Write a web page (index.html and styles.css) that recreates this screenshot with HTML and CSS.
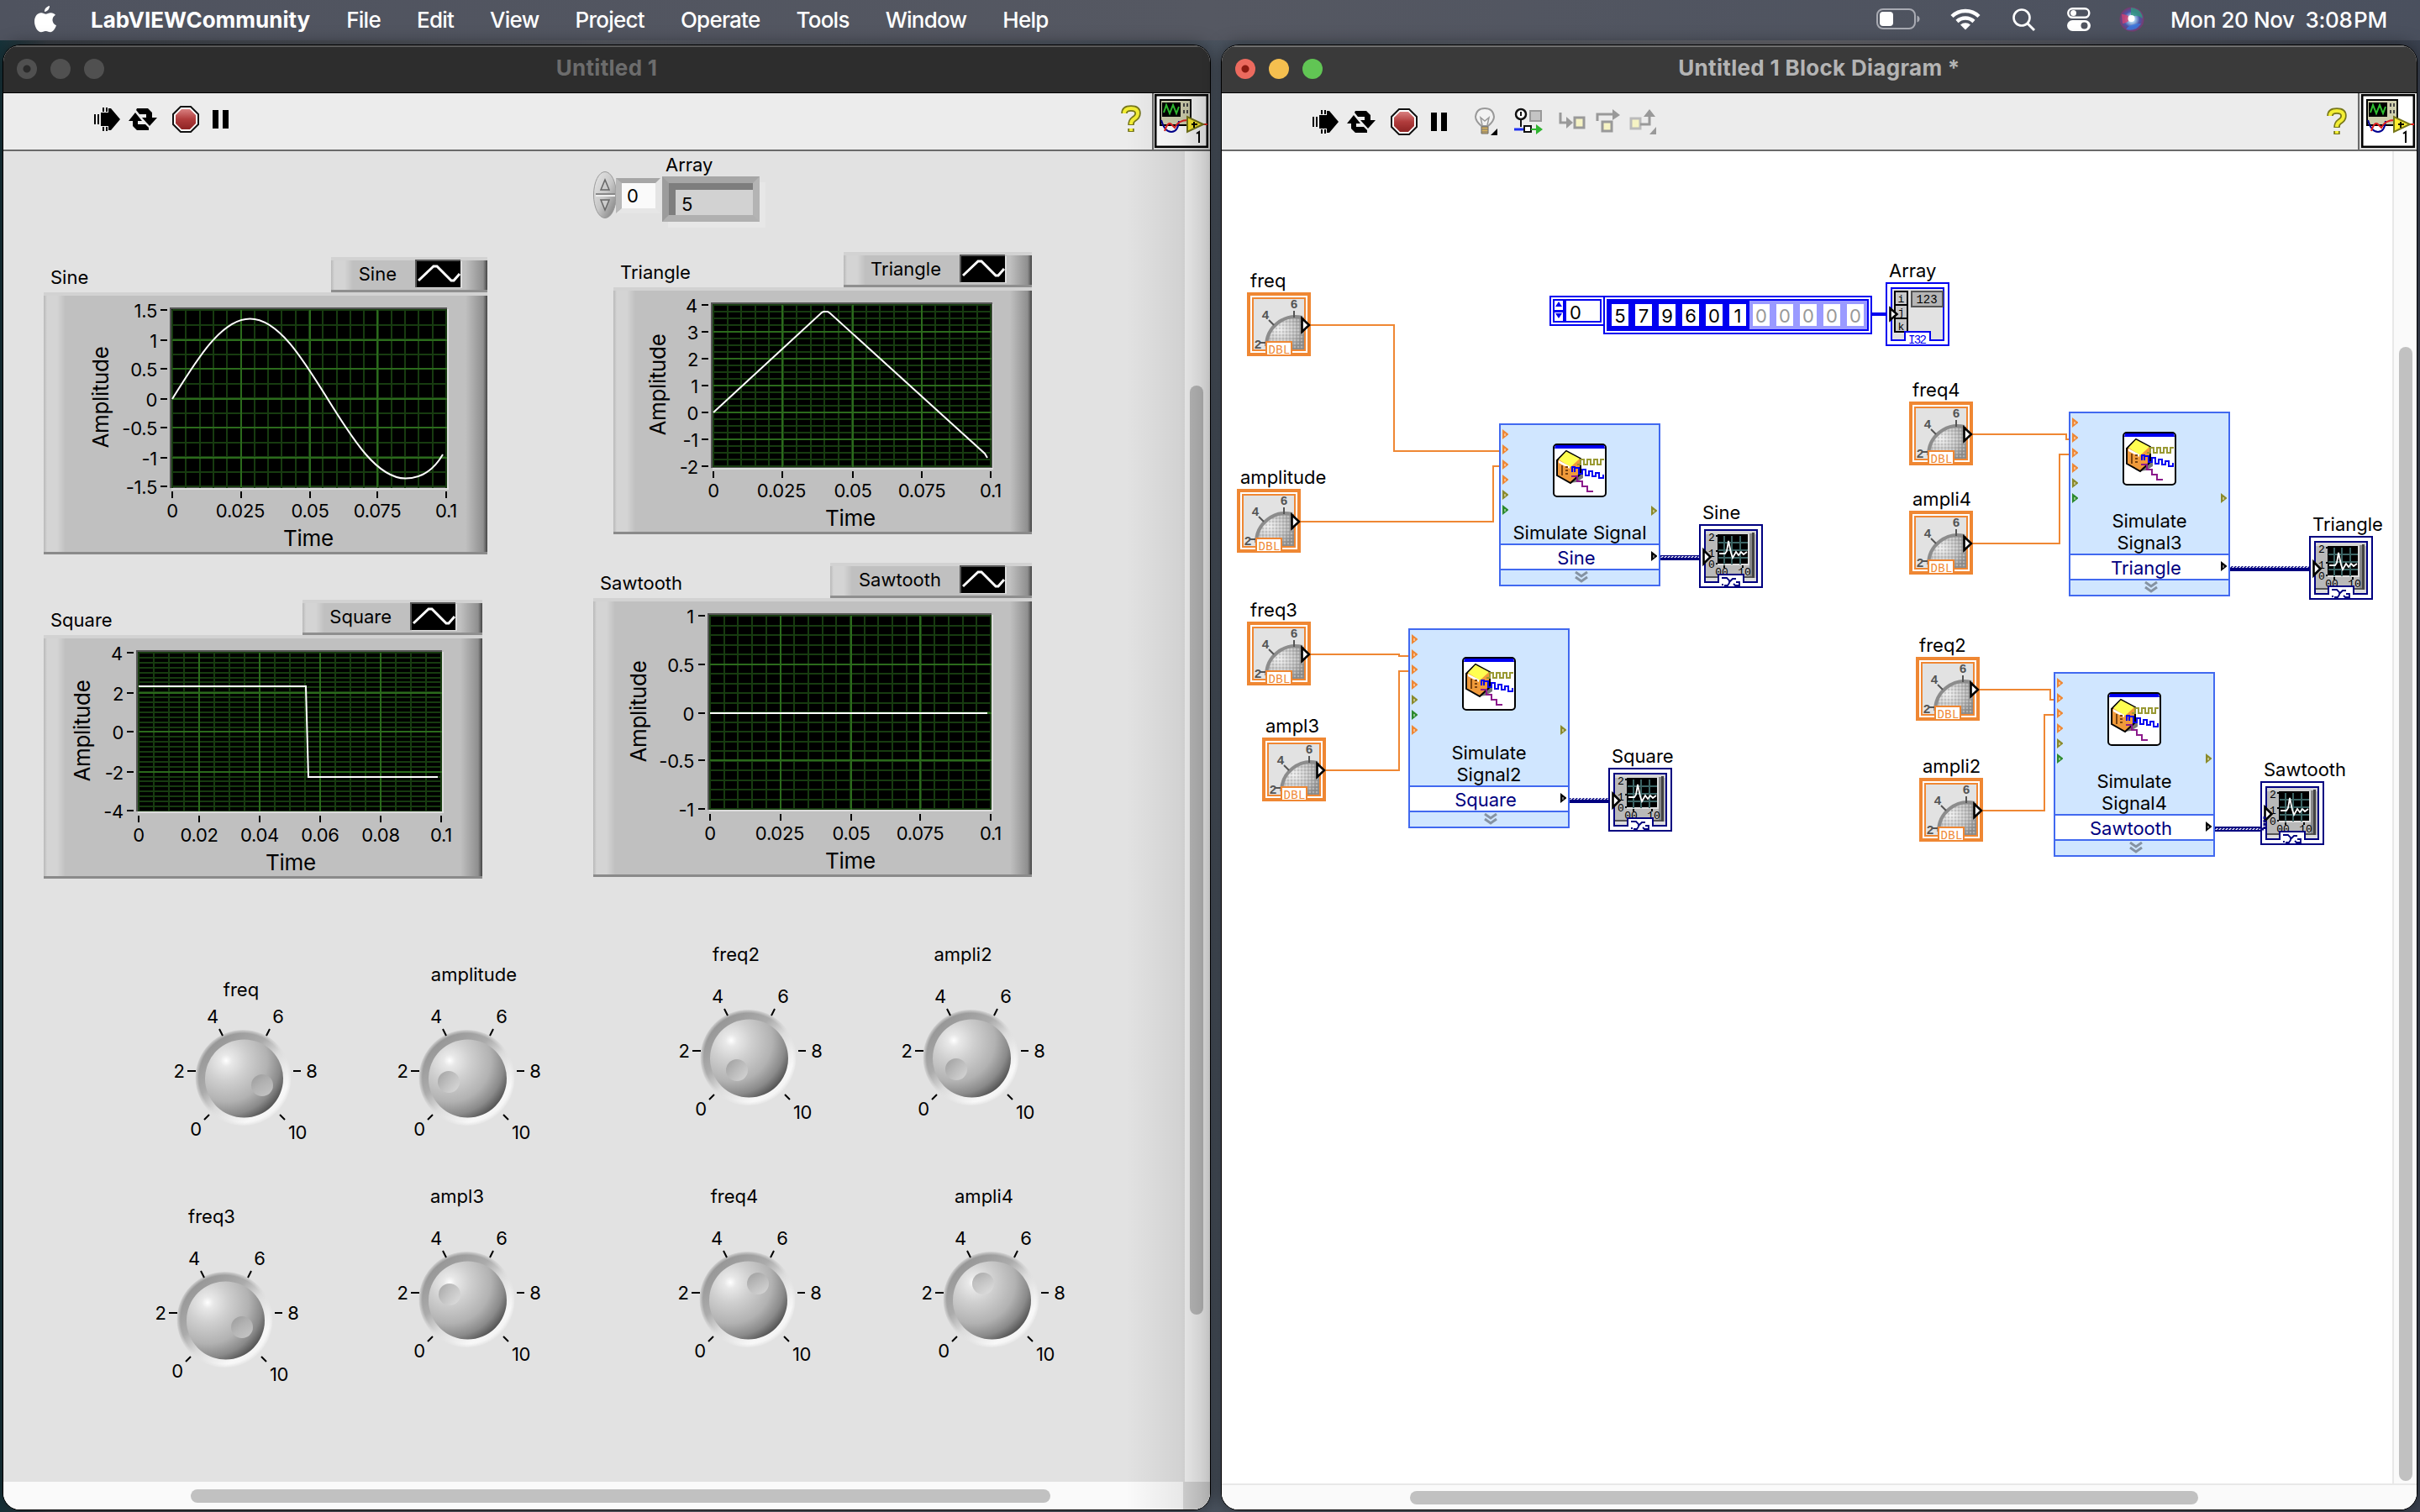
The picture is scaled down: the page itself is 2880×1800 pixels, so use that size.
FILE: index.html
```html
<!DOCTYPE html>
<html lang="en">
<head>
<meta charset="utf-8">
<title>Untitled 1 Block Diagram</title>
<link rel="stylesheet" href="styles.css">
</head>
<body>
<svg class="defs" width="0" height="0" aria-hidden="true">
  <defs>
    <radialGradient id="ball" cx="0.27" cy="0.27" r="0.85">
      <stop offset="0" stop-color="#fff"/><stop offset="0.09" stop-color="#e8e8e8"/><stop offset="0.3" stop-color="#d0d0d0"/>
      <stop offset="0.62" stop-color="#b2b2b2"/><stop offset="0.82" stop-color="#8a8a8a"/><stop offset="1" stop-color="#484848"/>
    </radialGradient>
    <linearGradient id="rim" x1="0.15" y1="0.1" x2="0.85" y2="0.9">
      <stop offset="0" stop-color="#939393"/><stop offset="0.35" stop-color="#ababab"/><stop offset="0.55" stop-color="#dcdcdc"/><stop offset="0.85" stop-color="#f8f8f8"/><stop offset="1" stop-color="#f2f2f2"/>
    </linearGradient>
    <radialGradient id="rimfade" cx="0.5" cy="0.5" r="0.5">
      <stop offset="0.91" stop-color="#e2e2e2" stop-opacity="0"/><stop offset="1" stop-color="#e2e2e2"/>
    </radialGradient>
    <linearGradient id="dimple" x1="0.15" y1="0.1" x2="0.85" y2="0.9">
      <stop offset="0" stop-color="#8f8f8f"/><stop offset="0.5" stop-color="#b9b9b9"/><stop offset="1" stop-color="#e0e0e0"/>
    </linearGradient>
    <radialGradient id="miniball" cx="0.35" cy="0.4" r="0.7">
      <stop offset="0" stop-color="#ececec"/><stop offset="0.6" stop-color="#bcbcbc"/><stop offset="1" stop-color="#8f8f8f"/>
    </radialGradient>
    <linearGradient id="red" x1="0" y1="0" x2="0" y2="1"><stop offset="0" stop-color="#d98080"/><stop offset="0.5" stop-color="#b03c3c"/><stop offset="1" stop-color="#8e2424"/></linearGradient>
    <linearGradient id="oval" x1="0" y1="0" x2="1" y2="1"><stop offset="0" stop-color="#e8e8e8"/><stop offset="0.5" stop-color="#c8c8c8"/><stop offset="1" stop-color="#777"/></linearGradient>
    <radialGradient id="siri"><stop offset="0" stop-color="#fff"/><stop offset="0.3" stop-color="#9cc4e8"/><stop offset="0.65" stop-color="#4a55a8"/><stop offset="1" stop-color="#7a3a6c"/></radialGradient>
    <pattern id="dither" width="4" height="4" patternUnits="userSpaceOnUse">
      <rect width="2" height="2" fill="#fff" opacity="0.3"/><rect x="2" y="2" width="2" height="2" fill="#777" opacity="0.25"/>
    </pattern>
    <pattern id="dash" width="4" height="6" patternUnits="userSpaceOnUse">
      <rect width="4" height="6" fill="#000080"/><path d="M0 4L2 2H4L2 4Z" fill="#fff"/>
    </pattern>
  </defs>

  <symbol id="knob" viewBox="-90 -90 180 180" overflow="visible">
    <circle r="57" cx="-0.500" cy="-1" fill="url(#rim)"/>
    <circle r="58" cx="-0.500" cy="-1" fill="url(#rimfade)"/>
    <circle r="46.500" cx="0.500" fill="url(#ball)"/>
    <path class="tick" d="M-29-59l4 8M31-59l-4 8M-67-9h10M59-9h9M-41 43l-6 6M43 43l6 6"/>
    <g class="num"><text x="-37" y="-66">4</text><text x="41" y="-66">6</text><text x="-77" y="-1">2</text><text x="81" y="-1">8</text><text x="-57" y="68">0</text><text x="64" y="72">10</text></g>
  </symbol>

  <symbol id="dbl" viewBox="0 0 76 76">
    <rect width="76" height="76" fill="#ef8733"/><rect x="4" y="4" width="68" height="68" fill="#fff"/><rect x="7" y="7" width="62" height="62" fill="none" stroke="#ef8733" stroke-width="2"/>
    <rect x="8" y="8" width="60" height="60" fill="#e2e2e2"/>
    <path d="M22 68A36 36 0 0 1 68 30V68Z" fill="url(#miniball)"/><path d="M22 68A36 36 0 0 1 68 30V68Z" fill="url(#dither)"/>
    <path d="M23 64A35 35 0 0 1 66 30" fill="none" stroke="#8c8c8c" stroke-width="4"/>
    <path d="M56 22v8M26 33l6 6M16 60h8" stroke="#555" stroke-width="2" fill="none"/>
    <g class="mini"><text x="56" y="19">6</text><text x="22" y="32">4</text><text x="13" y="67">2</text></g>
    <rect x="22" y="58" width="32" height="14" fill="#ef8733"/><rect x="24" y="60" width="28" height="14" fill="#fff"/>
    <text class="tag" x="38.500" y="72.500" fill="#ef8733" textLength="26">DBL</text>
    <path d="M65.500 31V47L74 39Z" fill="#fff" stroke="#000" stroke-width="2.600"/>
  </symbol>

  <symbol id="graph" viewBox="0 0 76 76">
    <rect width="76" height="76" fill="#000080"/><rect x="2" y="2" width="72" height="72" fill="#fff"/><rect x="7" y="7" width="62" height="62" fill="#b9b9b9" stroke="#000080" stroke-width="2"/>
    <path d="M8 8h60v4H8z" fill="#d5d5d5"/><rect x="8" y="64" width="60" height="4" fill="#ddd"/><rect x="8" y="62" width="58" height="2" fill="#555"/><path d="M60 11h3v51h-3z" fill="#888"/><path d="M63 10h3v54h-3z" fill="#444"/>
    <rect x="22" y="12" width="38" height="37" fill="#ddd"/><rect x="22" y="12" width="36" height="35" fill="#000"/>
    <path d="M30 14V48M39 14V48M49 14V48M23 22H58M23 31H58M23 40H58" stroke="#3c6464" stroke-width="2" fill="none"/>
    <path d="M24 35h7l2-3 2-12 3 14 2 6 4-7 3 4 3-4 3 3 4-3" stroke="#fff" stroke-width="1.800" fill="none"/>
    <g class="mini dark small"><text x="15" y="20">2</text><text x="15" y="39">1</text><text x="15" y="52">0</text><text x="27" y="61">00</text><text x="54" y="61">10</text></g>
    <path d="M20 14h2M20 32h2M20 47h2M30 49v3M52 49v3" stroke="#000" stroke-width="2"/>
    <rect x="22" y="59" width="32" height="11" fill="#000080"/><rect x="24" y="61" width="28" height="13" fill="#fff"/>
    <path d="M27 64h6l3 3v3l-2 3h-4M27 72h2M36 69l4-4h4M41 71l2 2h5v-4h-4" stroke="#000080" stroke-width="1.800" fill="none"/>
    <path d="M5.500 31V47L13.500 39Z" fill="#fff" stroke="#000" stroke-width="2.600"/>
  </symbol>

  <symbol id="express" viewBox="0 0 64 64">
    <rect x="1" y="1" width="62" height="62" rx="4" fill="#fff" stroke="#000" stroke-width="2"/><path d="M3 2h58l1 4H2z" fill="#0000f0"/>
    <path d="M20 47l8-1 8-5v-7l-5-4z" fill="#777"/>
    <path d="M5 20L16 9L33 18V36L21 47L5 38Z" fill="#f09a3a" stroke="#000" stroke-width="2"/>
    <path d="M7 19L16 9.500L32 18L21 28Z" fill="#ffff50"/><path d="M7 20l13 7v3L7 23z" fill="#fff"/>
    <path d="M11 26v12M15 28h3M15 32h3M15 36h3" stroke="#7a4310" stroke-width="2" fill="none"/>
    <path d="M29 25h4v-6h4v6h4v-6h4v6h4v-6h4v6h4v-6h4" stroke="#999933" stroke-width="2" fill="none"/>
    <path d="M23 34v-6h3v6M26 29h5v7h4v-5h4v7h4v-5h4v6h4v-4h4v6h5v-4" stroke="#0000f0" stroke-width="2" fill="none"/>
    <path d="M22 39h7v6h6v6h6v6h7" stroke="#8b1a8b" stroke-width="2" fill="none"/>
  </symbol>

  <symbol id="pin" viewBox="0 0 7 12"><path d="M0 0L7 5.500V6.500L0 12Z"/><rect x="2" y="5" width="2" height="3" fill="#fff" opacity="0.45"/></symbol>
  <symbol id="chev" viewBox="0 0 16 14"><path d="M1 1l7 5 7-5M1 7l7 5 7-5" fill="none" stroke="#8593a3" stroke-width="3"/></symbol>

  <symbol id="run" viewBox="0 0 32 28"><path d="M0 8h2v12H0zM4 8h2v12H4zM8 6h9V1h3l11 13-11 13h-3v-5H8z"/><path d="M10 0h2v5h-2zM10 23h2v5h-2zM14 0h2v5h-2zM14 23h2v5h-2z"/></symbol>
  <symbol id="loop" viewBox="0 0 34 28"><path d="M10 1h13l5 5v6h6l-9 10-9-10h5V8h-8L9 3zM24 27H10l-5-5v-6H0L8 6l8 10h-5v4h9l4 4z"/></symbol>
  <symbol id="stop" viewBox="0 0 32 32"><path d="M10 1h12l9 9v12l-9 9H10l-9-9V10z" fill="#fff" stroke="#111" stroke-width="2"/><path d="M11 4h10l7 7v10l-7 7H11l-7-7V11z" fill="url(#red)"/></symbol>
  <symbol id="pause" viewBox="0 0 20 22"><path d="M0 0h7v22H0zM12 0h7v22h-7z"/></symbol>
  <symbol id="help" viewBox="0 0 24 34"><path d="M4 10Q4 4 12 4T20 10Q20 14 15 17Q12 19 12 24M12 28v4" fill="none" stroke="#77771a" stroke-width="7.500"/><path d="M4 10Q4 4 12 4T20 10Q20 14 15 17Q12 19 12 23M12 28v3" fill="none" stroke="#f3ee35" stroke-width="4"/></symbol>
  <symbol id="vi" viewBox="0 0 64 64">
    <rect x="1" y="1" width="62" height="62" fill="#fff" stroke="#000" stroke-width="3"/>
    <rect x="7" y="7" width="36" height="30" fill="#cfcfae" stroke="#000" stroke-width="2"/><rect x="9" y="10" width="22" height="17" fill="#000"/>
    <path d="M11 22l3-9 4 10 4-10 4 10 3-8" stroke="#30c030" stroke-width="2" fill="none"/><path d="M35 11v4M39 11v4M35 19v4M39 19v4" stroke="#444" stroke-width="2"/>
    <path d="M8 31q4 14 12 14t9-13" fill="none" stroke="#000090" stroke-width="2"/><path d="M12 44q4-12 8-8t4 4q4-9 16-9M54 36h9" fill="none" stroke="#e02020" stroke-width="2"/>
    <path d="M39 27V45L58 36Z" fill="#ffee30" stroke="#77771a" stroke-width="2"/><path d="M44 36h7M47 33v7" stroke="#000" stroke-width="2"/>
    <path d="M50 47l3-2V58" fill="none" stroke="#000" stroke-width="2"/>
  </symbol>
</svg>

<div class="desktop">
  <header class="menubar">
    <svg class="apple" viewBox="0 0 26 32"><path d="M18 0c.3 3-2.600 7-6 7C11.600 4 14.500.6 18 0zM25 10.800c-5.500 3.400-4 10.600 1 12.500-1.500 4-4 8-7 8-2.200 0-3-1.300-5.600-1.300S10 31.300 8 31.300C3.500 31.300-.3 24 0 18 .3 12 4 8.300 8 8.300c2.300 0 4 1.400 5.500 1.400S17 8.200 19.500 8.200c2.200 0 4.200 1 5.500 2.600z" fill="#fff"/></svg>
    <nav class="menus"><b>LabVIEWCommunity</b><span>File</span><span>Edit</span><span>View</span><span>Project</span><span>Operate</span><span>Tools</span><span>Window</span><span>Help</span></nav>
    <div class="status">
      <svg width="52" height="26" viewBox="0 0 52 26"><rect x="1" y="1" width="45" height="23" rx="7" fill="none" stroke="#a9abb3" stroke-width="2"/><rect x="4" y="4" width="16" height="17" rx="4" fill="#fff"/><path d="M48.500 8.500q3 1 3 4t-3 4z" fill="#a9abb3"/></svg>
      <svg width="36" height="26" viewBox="0 0 36 26"><g fill="none" stroke="#fff" stroke-width="4.500"><path d="M2 9.500a23 23 0 0 1 32 0"/><path d="M8 15.500a14.500 14.500 0 0 1 20 0"/></g><path d="M12 19.500a9 9 0 0 1 12 0l-6 6z" fill="#fff"/></svg>
      <svg width="27" height="27" viewBox="0 0 27 27"><circle cx="11" cy="11" r="9.500" fill="none" stroke="#fff" stroke-width="2.600"/><path d="M18 18l8 8" stroke="#fff" stroke-width="3"/></svg>
      <svg width="28" height="28" viewBox="0 0 28 28"><rect x="1.300" y="1.300" width="25" height="10.500" rx="5.200" fill="none" stroke="#fff" stroke-width="2.500"/><circle cx="7.500" cy="6.500" r="3.500" fill="#fff"/><rect y="15" width="28" height="13" rx="6.500" fill="#fff"/><circle cx="20.500" cy="21.500" r="4" fill="#50545f"/></svg>
      <svg width="30" height="30" viewBox="0 0 30 30"><circle cx="15" cy="15" r="14.500" fill="url(#siri)"/><path d="M3 9Q10 8 14 15Q8 20 4 20Z" fill="#d6406f" opacity=".8"/><path d="M14 1Q27 2 28 14Q20 8 14 13Z" fill="#2f9a80" opacity=".8"/><path d="M8 27Q12 20 26 20Q20 30 8 27Z" fill="#3b7ae0" opacity=".8"/><circle cx="14.500" cy="14" r="4" fill="#fff"/></svg>
      <span class="date">Mon 20 Nov&nbsp; 3:08<small> </small>PM</span>
    </div>
  </header>

  <section class="window front">
    <div class="titlebar"><i class="light close"></i><i class="light"></i><i class="light"></i><h1>Untitled 1</h1></div>
    <div class="toolbar">
      <svg class="t-run"><use href="#run"/></svg><svg class="t-loop"><use href="#loop"/></svg><svg class="t-stop"><use href="#stop"/></svg><svg class="t-pause"><use href="#pause"/></svg>
      <svg class="t-help"><use href="#help"/></svg><div class="vi"><svg><use href="#vi"/></svg></div>
    </div>
    <div class="canvas">
      <div class="layer">
        <span class="label a-title">Array</span>
        <svg class="spin" viewBox="0 0 28 56"><ellipse cx="14" cy="28" rx="13.500" ry="27.500" fill="url(#oval)" stroke="#999"/><path d="M3 27h23" stroke="#888" stroke-width="2"/><path d="M3 29h23" stroke="#eee" stroke-width="2"/><path d="M9 22l5-12 5 12zM9 34l5 12 5-12z" fill="#ccc" stroke="#666" stroke-width="1.500"/></svg>
        <div class="index">0</div><div class="element">5</div>

        <span class="label s-title">Sine</span>
        <div class="chart c-sine">
          <div class="legend">Sine<svg class="swatch" viewBox="0 0 56 34"><use href="#swatchline"/></svg></div>
          <svg class="plot" viewBox="52 348 528 312">
            <rect class="hi" x="204" y="368" width="330" height="215"/><rect class="lo" x="202" y="366" width="330" height="215"/><rect x="204" y="368" width="327" height="212"/>
            <g class="minor"><path d="M204 475H532" stroke-width="212" stroke-dasharray="2 14.300"/><path d="M368 368V580" stroke-width="327" stroke-dasharray="2 15.500"/></g>
            <g class="major"><path d="M287 369V580M369 369V580M449 369V580M205 405H532M205 439H532M205 475H532M205 509H532M205 545H532"/></g>
            <path class="axis" d="M191 369h8M191 405h8M191 439h8M191 475h8M191 509h8M191 545h8M191 579h8M205 585v8M287 585v8M369 585v8M449 585v8M531 585v8"/>
            <path class="trace" d="M205 475C235.200 426.300 264 379.500 297.500 379.500C331 379.500 359.800 426.300 390 475C420.200 523.700 449 569.500 482.500 569.500C501 569.500 516 560 527 541"/>
            <g class="ynum"><text x="187" y="378">1.5</text><text x="187" y="414">1</text><text x="187" y="448">0.5</text><text x="187" y="484">0</text><text x="187" y="518">-0.5</text><text x="187" y="554">-1</text><text x="187" y="588">-1.5</text></g>
            <g class="num"><text x="205" y="616">0</text><text x="286" y="616">0.025</text><text x="369" y="616">0.05</text><text x="449" y="616">0.075</text><text x="531" y="616">0.1</text></g>
            <text class="name" x="367" y="650">Time</text><text class="name" transform="translate(129 473) rotate(-90)" textLength="121">Amplitude</text>
          </svg>
        </div>

        <span class="label t-title">Triangle</span>
        <div class="chart c-tri">
          <div class="legend">Triangle<svg class="swatch" viewBox="0 0 56 34"><use href="#swatchline"/></svg></div>
          <svg class="plot" viewBox="730 342 498 294">
            <rect class="hi" x="848" y="362" width="334" height="197"/><rect class="lo" x="846" y="360" width="335" height="197"/><rect x="848" y="362" width="332" height="194"/>
            <g class="minor"><path d="M848 459H1180" stroke-width="194" stroke-dasharray="2 14.500"/><path d="M1014 362V556" stroke-width="331" stroke-dasharray="2 6"/></g>
            <g class="major"><path d="M931 363V556M1015 363V556M1097 363V556M849 395H1180M849 427H1180M849 459H1180M849 491H1180M849 523H1180"/></g>
            <path class="axis" d="M835 363h8M835 395h8M835 427h8M835 459h8M835 491h8M835 523h8M835 555h8M849 561v8M931 561v8M1015 561v8M1097 561v8M1179 561v8"/>
            <path class="trace" d="M849 491L978 372L980 371H985L988 373L1172 540L1175 545"/>
            <g class="ynum"><text x="830" y="372">4</text><text x="831" y="404">3</text><text x="831" y="436">2</text><text x="831" y="468">1</text><text x="831" y="500">0</text><text x="831" y="532">-1</text><text x="831" y="564">-2</text></g>
            <g class="num"><text x="849" y="592">0</text><text x="930" y="592">0.025</text><text x="1015" y="592">0.05</text><text x="1097" y="592">0.075</text><text x="1179" y="592">0.1</text></g>
            <text class="name" x="1012" y="626">Time</text><text class="name" transform="translate(792 458) rotate(-90)" textLength="121">Amplitude</text>
          </svg>
        </div>

        <span class="label q-title">Square</span>
        <div class="chart c-sq">
          <div class="legend">Square<svg class="swatch" viewBox="0 0 56 34"><use href="#swatchline"/></svg></div>
          <svg class="plot" viewBox="52 756 522 290">
            <rect class="hi" x="164" y="776" width="364" height="192"/><rect class="lo" x="162" y="774" width="364" height="192"/><rect x="164" y="776" width="362" height="190"/>
            <g class="minor"><path d="M164 871H526" stroke-width="190" stroke-dasharray="2 16"/><path d="M345 776V966" stroke-width="361" stroke-dasharray="2 3.900"/></g>
            <g class="major"><path d="M237 777V966M309 777V966M381 777V966M453 777V966M165 825H526M165 871H526M165 919H526"/></g>
            <path class="axis" d="M151 777h8M151 825h8M151 871h8M151 919h8M151 965h8M165 971v8M237 971v8M309 971v8M381 971v8M453 971v8M525 971v8"/>
            <path class="trace" d="M165 817H364L367 925H521"/>
            <g class="ynum"><text x="146" y="786">4</text><text x="147" y="834">2</text><text x="147" y="880">0</text><text x="147" y="928">-2</text><text x="147" y="974">-4</text></g>
            <g class="num"><text x="165" y="1002">0</text><text x="237" y="1002">0.02</text><text x="309" y="1002">0.04</text><text x="381" y="1002">0.06</text><text x="453" y="1002">0.08</text><text x="525" y="1002">0.1</text></g>
            <text class="name" x="346" y="1036">Time</text><text class="name" transform="translate(107 870) rotate(-90)" textLength="121">Amplitude</text>
          </svg>
        </div>

        <span class="label w-title">Sawtooth</span>
        <div class="chart c-saw">
          <div class="legend">Sawtooth<svg class="swatch" viewBox="0 0 56 34"><use href="#swatchline"/></svg></div>
          <svg class="plot" viewBox="706 712 522 332">
            <rect class="hi" x="844" y="732" width="338" height="234"/><rect class="lo" x="842" y="730" width="338" height="234"/><rect x="844" y="732" width="336" height="232"/>
            <g class="minor"><path d="M844 848H1180" stroke-width="232" stroke-dasharray="2 14.700"/><path d="M1012 732V964" stroke-width="335" stroke-dasharray="2 9.500"/></g>
            <g class="major"><path d="M929 733V964M1013 733V964M1095 733V964M845 791H1180M845 849H1180M845 905H1180"/></g>
            <path class="axis" d="M831 733h8M831 791h8M831 849h8M831 905h8M831 963h8M845 969v8M929 969v8M1013 969v8M1095 969v8M1179 969v8"/>
            <path class="trace" d="M845 849H1175"/>
            <g class="ynum"><text x="826" y="742">1</text><text x="826" y="800">0.5</text><text x="826" y="858">0</text><text x="826" y="914">-0.5</text><text x="826" y="972">-1</text></g>
            <g class="num"><text x="845" y="1000">0</text><text x="928" y="1000">0.025</text><text x="1013" y="1000">0.05</text><text x="1095" y="1000">0.075</text><text x="1179" y="1000">0.1</text></g>
            <text class="name" x="1012" y="1034">Time</text><text class="name" transform="translate(769 847) rotate(-90)" textLength="121">Amplitude</text>
          </svg>
        </div>

        <svg class="knob k1" viewBox="-90 -90 180 180"><use href="#knob" x="-90" y="-90" width="180" height="180"/><circle class="dent" cx="22" cy="8" r="13"/></svg>
        <svg class="knob k2" viewBox="-90 -90 180 180"><use href="#knob" x="-90" y="-90" width="180" height="180"/><circle class="dent" cx="-22" cy="4" r="13"/></svg>
        <svg class="knob k3" viewBox="-90 -90 180 180"><use href="#knob" x="-90" y="-90" width="180" height="180"/><circle class="dent" cx="-14" cy="14" r="13"/></svg>
        <svg class="knob k4" viewBox="-90 -90 180 180"><use href="#knob" x="-90" y="-90" width="180" height="180"/><circle class="dent" cx="-18" cy="13" r="13"/></svg>
        <svg class="knob k5" viewBox="-90 -90 180 180"><use href="#knob" x="-90" y="-90" width="180" height="180"/><circle class="dent" cx="20" cy="8" r="13"/></svg>
        <svg class="knob k6" viewBox="-90 -90 180 180"><use href="#knob" x="-90" y="-90" width="180" height="180"/><circle class="dent" cx="-21" cy="-7" r="13"/></svg>
        <svg class="knob k7" viewBox="-90 -90 180 180"><use href="#knob" x="-90" y="-90" width="180" height="180"/><circle class="dent" cx="12" cy="-20" r="13"/></svg>
        <svg class="knob k8" viewBox="-90 -90 180 180"><use href="#knob" x="-90" y="-90" width="180" height="180"/><circle class="dent" cx="-10" cy="-20" r="13"/></svg>
        <span class="label kl k1l">freq</span><span class="label kl k2l">amplitude</span><span class="label kl k3l">freq2</span><span class="label kl k4l">ampli2</span>
        <span class="label kl k5l">freq3</span><span class="label kl k6l">ampl3</span><span class="label kl k7l">freq4</span><span class="label kl k8l">ampli4</span>
      </div>
    </div>
    <div class="vtrack"><i></i></div><div class="htrack"><i></i></div><div class="corner"></div>
    <div class="shade"></div>
  </section>

  <section class="window diagram">
    <div class="titlebar"><i class="light close"></i><i class="light min"></i><i class="light max"></i><h1>Untitled 1 Block Diagram *</h1></div>
    <div class="toolbar">
      <svg class="t-run"><use href="#run"/></svg><svg class="t-loop"><use href="#loop"/></svg><svg class="t-stop"><use href="#stop"/></svg><svg class="t-pause"><use href="#pause"/></svg>
      <svg class="t-bulb" viewBox="0 0 28 34"><path d="M8 22Q1 16 1 11Q2 1 12 1T23 11Q23 16 16 22Z" fill="#f2f2f2" stroke="#999" stroke-width="2"/><path d="M9 21L7 12l5 4 5-4-2 9" fill="none" stroke="#999" stroke-width="1.500"/><path d="M8 23h8v8H8z" fill="#d9b25a" stroke="#666"/><path d="M8 26h8M8 29h8" stroke="#777"/><path d="M27 25v8h-8z"/></svg>
      <svg class="t-retain" viewBox="0 0 34 32"><circle cx="8" cy="7" r="6" fill="#fff" stroke="#111" stroke-width="2.500"/><path d="M8 4v5M8 13v9" stroke="#111" stroke-width="2"/><rect x="19" y="3" width="13" height="12" fill="#c4c4c4" stroke="#999" stroke-width="2"/><path d="M0 25h12" stroke="#2030f0" stroke-width="3"/><rect x="12" y="21" width="8" height="7" fill="#fff" stroke="#111" stroke-width="2"/><path d="M20 24h6v-5l8 6-8 6v-5h-6z" fill="#2fb52f"/></svg>
      <svg class="t-in" viewBox="0 0 32 26"><path d="M2 2v12h9" fill="none" stroke="#999" stroke-width="3"/><path d="M9 7l8 7-8 7z" fill="#999"/><rect x="19" y="8" width="11" height="12" fill="#f6f3c4" stroke="#999" stroke-width="3"/></svg>
      <svg class="t-over" viewBox="0 0 30 30"><path d="M2 14V6h20" fill="none" stroke="#999" stroke-width="3"/><path d="M20 0l9 7-9 6z" fill="#999"/><rect x="8" y="15" width="11" height="11" fill="#f6f3c4" stroke="#999" stroke-width="3"/></svg>
      <svg class="t-out" viewBox="0 0 32 30"><rect x="2" y="11" width="11" height="12" fill="#f6f3c4" stroke="#bbb" stroke-width="3"/><path d="M13 18h11V6" fill="none" stroke="#999" stroke-width="3"/><path d="M17 9l7-9 7 9zM32 21v9h-8z" fill="#999"/></svg>
      <svg class="t-help"><use href="#help"/></svg><div class="vi"><svg><use href="#vi"/></svg></div>
    </div>
    <div class="canvas">
      <div class="layer">
        <svg class="wires" viewBox="1454 180 1400 1000">
          <path class="w" d="M1560 387H1659V537H1784M1548 621H1777V555H1784M1560 779H1665V781H1676M1578 917H1665V799H1676M2348 517H2459V523H2462M2348 647H2451V541H2462M2356 821H2440V833H2444M2360 965H2433V851H2444"/>
          <path d="M2226 374H2246" stroke="#0000f0" stroke-width="4"/>
          <g fill="url(#dash)"><rect x="1976" y="661" width="48" height="6"/><rect x="1868" y="950" width="48" height="6"/><rect x="2654" y="674" width="96" height="6"/><rect x="2636" y="984" width="56" height="6"/></g>
        </svg>

        <span class="label d1l">freq</span><svg class="term d1"><use href="#dbl"/></svg>
        <span class="label d2l">amplitude</span><svg class="term d2"><use href="#dbl"/></svg>
        <span class="label d3l">freq3</span><svg class="term d3"><use href="#dbl"/></svg>
        <span class="label d4l">ampl3</span><svg class="term d4"><use href="#dbl"/></svg>
        <span class="label d5l">freq4</span><svg class="term d5"><use href="#dbl"/></svg>
        <span class="label d6l">ampli4</span><svg class="term d6"><use href="#dbl"/></svg>
        <span class="label d7l">freq2</span><svg class="term d7"><use href="#dbl"/></svg>
        <span class="label d8l">ampli2</span><svg class="term d8"><use href="#dbl"/></svg>

        <div class="aindex"><svg viewBox="0 0 14 28"><rect width="14" height="28" fill="#0000f0"/><path d="M2 2h10v11H2zM2 16h10v10H2z" fill="#fff"/><path d="M7 3l4 6H3zM7 23l4-6H3z" fill="#0000f0"/></svg><b>0</b></div>
        <div class="aconst"><span>5</span><span>7</span><span>9</span><span>6</span><span>0</span><span>1</span><div class="dim"><span>0</span><span>0</span><span>0</span><span>0</span><span>0</span></div></div>
        <span class="label g0l">Array</span>
        <svg class="term g0" viewBox="0 0 76 76">
          <rect x="1" y="1" width="74" height="74" fill="#fff" stroke="#0000f0" stroke-width="2"/><rect x="7" y="7" width="62" height="62" fill="#e2e2e2" stroke="#0000f0" stroke-width="2"/>
          <rect x="31" y="11" width="37" height="18" fill="#b5b5b5" stroke="#555" stroke-width="2"/><text class="tag" x="49" y="25" fill="#000">123</text>
          <path d="M11 11h15v48H11zM11 27h15M11 43h15" fill="#c8c8c8" stroke="#000" stroke-width="2"/>
          <g class="mini dark small"><text x="18.500" y="24">i</text><text x="18.500" y="40">j</text><text x="18.500" y="57">k</text></g>
          <rect x="22" y="58" width="32" height="12" fill="#0000f0"/><rect x="24" y="60" width="28" height="14" fill="#fff"/><text class="tag" x="38" y="72.500" fill="#0000f0" textLength="22">I32</text>
          <path d="M5.500 31V45L13.500 38Z" fill="#fff" stroke="#000" stroke-width="2.600"/>
        </svg>

        <div class="node n1"><div class="body"><svg class="pins"><use href="#p6"/></svg><svg class="ico"><use href="#express"/></svg><svg class="opin"><use href="#pin"/></svg><p>Simulate Signal</p></div><div class="out">Sine<svg><use href="#pin"/></svg></div><div class="foot"><svg><use href="#chev"/></svg></div></div>
        <div class="node n2"><div class="body"><svg class="pins"><use href="#p6"/><use class="orange" href="#pin" x="0" y="108" width="7" height="12"/></svg><svg class="ico"><use href="#express"/></svg><svg class="opin"><use href="#pin"/></svg><p>Simulate<br>Signal2</p></div><div class="out">Square<svg><use href="#pin"/></svg></div><div class="foot"><svg><use href="#chev"/></svg></div></div>
        <div class="node n3"><div class="body"><svg class="pins"><use href="#p6"/></svg><svg class="ico"><use href="#express"/></svg><svg class="opin"><use href="#pin"/></svg><p>Simulate<br>Signal3</p></div><div class="out">Triangle<svg><use href="#pin"/></svg></div><div class="foot"><svg><use href="#chev"/></svg></div></div>
        <div class="node n4"><div class="body"><svg class="pins"><use href="#p6"/></svg><svg class="ico"><use href="#express"/></svg><svg class="opin"><use href="#pin"/></svg><p>Simulate<br>Signal4</p></div><div class="out">Sawtooth<svg><use href="#pin"/></svg></div><div class="foot"><svg><use href="#chev"/></svg></div></div>

        <span class="label g1l">Sine</span><svg class="term g1"><use href="#graph"/></svg>
        <span class="label g2l">Square</span><svg class="term g2"><use href="#graph"/></svg>
        <span class="label g3l">Triangle</span><svg class="term g3"><use href="#graph"/></svg>
        <span class="label g4l">Sawtooth</span><svg class="term g4"><use href="#graph"/><path d="M1 57H5V42" fill="none" stroke="#000080" stroke-width="3" stroke-dasharray="3 1"/></svg>
      </div>
    </div>
    <div class="vtrack"><i></i></div><div class="htrack"><i></i></div>
  </section>
</div>

<svg class="defs" width="0" height="0" aria-hidden="true"><defs>
  <g id="swatchline"><rect width="54" height="33" fill="#555"/><rect x="2" y="2" width="54" height="32" fill="#ddd"/><rect x="2" y="2" width="52" height="31"/><path d="M4 25L22 8H26L43 25H46L53 17" fill="none" stroke="#fff" stroke-width="3"/></g>
  <g id="p6"><g class="orange"><use href="#pin" y="0" width="7" height="12"/><use href="#pin" y="18" width="7" height="12"/><use href="#pin" y="36" width="7" height="12"/><use href="#pin" y="54" width="7" height="12"/></g><use class="olive" href="#pin" y="72" width="7" height="12"/><use class="green" href="#pin" y="90" width="7" height="12"/></g>
</defs></svg>
</body>
</html>
```
FILE: styles.css
```css
* { box-sizing: border-box; }
body { margin: 0; font-family: Inter, "Liberation Sans", sans-serif; color: #000; }
.defs { position: absolute; }
svg { display: block; overflow: visible; }
.desktop { position: relative; width: 2880px; height: 1800px; overflow: hidden; background: linear-gradient(90deg, #17333a 0, #3c4148 2%, #5c5f68 25%, #4b5460 50%, #6a6a70 75%, #3b4250 100%); }

/* menu bar */
.menubar { height: 48px; display: flex; align-items: center; padding: 0 37px 2px 41px; background: linear-gradient(90deg, #4f535f, #555862 50%, #4a505e); color: #fff; font-size: 26px; }
.apple { width: 26px; height: 32px; margin-right: 41px; }
.menus { display: flex; gap: 43px; white-space: nowrap; font-weight: 500; letter-spacing: -0.75px; }
.menus b { font-weight: 700; letter-spacing: 0; }
.status { margin-left: auto; display: flex; align-items: center; }
.status svg { margin-right: 38px; }
.status svg:nth-child(1) { margin-right: 36px; }
.status svg:nth-child(4) { margin-right: 36px; }
.status svg:nth-child(5) { margin-left: -2px; margin-right: 31px; }
.date { white-space: nowrap; font-weight: 500; width: 260px; letter-spacing: -0.4px; }
.date small { font-size: 8px; }

/* windows */
.window { position: absolute; top: 54px; height: 1743px; border-radius: 20px; overflow: hidden; display: flex; flex-direction: column; box-shadow: 0 0 0 1px #000, 0 0 20px rgba(0,0,0,.5); background: #fff; }
.front { left: 4px; width: 1436px; }
.diagram { left: 1454px; width: 1422px; }
.titlebar { flex: none; height: 57px; position: relative; display: flex; align-items: center; gap: 16px; padding: 0 16px 2px; background: #2d2d2d; border-top: 2px solid #5a5a5a; border-bottom: 1px solid #000; }
.diagram .titlebar { background: #3a3a3a; border-top-color: #707070; }
.light { width: 24px; height: 24px; border-radius: 50%; background: #505050; }
.close { background: radial-gradient(circle, #2a2a2a 4px, #505050 5px); }
.diagram .close { background: radial-gradient(circle, #8c1a10 4px, #ec6a5e 5px); }
.min { background: #f5bf4f; }
.max { background: #61c554; }
.titlebar h1 { position: absolute; left: 0; right: 0; top: 9px; margin: 0; text-align: center; font-size: 26px; line-height: 32px; font-weight: 700; color: #6c6c6c; letter-spacing: 0.3px; }
.diagram .titlebar h1 { color: #b4b4b4; }
.toolbar { flex: none; height: 69px; display: flex; align-items: center; padding: 0 0 5px 108px; background: #ececec; border-bottom: 2px solid #6a6a6a; }
.diagram .toolbar { padding-top: 5px; padding-bottom: 4px; }
.toolbar svg { flex: none; }
.t-run { width: 32px; height: 28px; }
.t-loop { width: 34px; height: 28px; margin-left: 9px; }
.t-stop { width: 32px; height: 32px; margin-left: 18px; }
.t-pause { width: 20px; height: 22px; margin-left: 16px; }
.t-bulb { width: 28px; height: 34px; margin-left: 32px; }
.t-retain { width: 34px; height: 32px; margin-left: 19px; }
.t-in { width: 32px; height: 26px; margin-left: 19px; }
.t-over { width: 30px; height: 30px; margin-left: 12px; }
.t-out { width: 32px; height: 30px; margin-left: 10px; }
.t-help { width: 24px; height: 34px; margin-left: auto; margin-right: 13px; }
.vi { align-self: stretch; margin: 0 0 -5px; width: 69px; padding: 1px 0 0 1px; border-left: 2px solid #6a6a6a; background: #ddd; }
.diagram .vi { margin: -5px 0 -4px; width: 70px; padding-left: 2px; }
.vi svg { width: 64px; height: 64px; }
.canvas { flex: 1; position: relative; overflow: hidden; background: #e2e2e2; }
.diagram .canvas { background: #fff; }
.layer { position: absolute; left: -4px; top: -180px; }
.diagram .layer { left: -1454px; }

/* scroll bars */
.vtrack, .htrack { position: absolute; background: #fafafa; }
.vtrack i, .htrack i { position: absolute; border-radius: 8px; background: #c1c1c1; }
.front .vtrack { left: 1406px; top: 126px; width: 30px; bottom: 33px; }
.front .vtrack i { left: 6px; top: 279px; width: 16px; height: 1106px; }
.front .htrack { left: 0; right: 0; bottom: 0; height: 33px; }
.front .htrack i { left: 223px; top: 9px; width: 1023px; height: 16px; }
.corner { position: absolute; right: 0; bottom: 0; width: 32px; height: 33px; background: #dcdcdc; }
.diagram .vtrack { left: 1393px; top: 126px; width: 29px; bottom: 31px; border-left: 2px solid #e8e8e8; }
.diagram .vtrack i { left: 6px; top: 233px; width: 16px; height: 1350px; }
.diagram .htrack { left: 0; right: 0; bottom: 0; height: 31px; border-top: 2px solid #e8e8e8; }
.diagram .htrack i { left: 224px; top: 7px; width: 938px; height: 16px; }
.shade { position: absolute; top: 57px; right: 0; bottom: 0; width: 100px; background: linear-gradient(90deg, rgba(0,0,0,0), rgba(0,0,0,.07) 65%, rgba(0,0,0,.2)); }

/* free-standing captions */
.label { position: absolute; white-space: nowrap; font-size: 22px; line-height: 26px; }
.a-title { left: 792px; top: 183px; }
.s-title { left: 60px; top: 317px; }
.t-title { left: 738px; top: 311px; }
.q-title { left: 60px; top: 725px; }
.w-title { left: 714px; top: 681px; }

/* array control */
.spin { position: absolute; left: 706px; top: 204px; width: 28px; height: 56px; }
.index, .element { position: absolute; font-size: 22px; border-style: solid; }
.index { left: 733px; top: 212px; width: 53px; height: 42px; line-height: 31px; padding-left: 6px; border-width: 6px 6px 6px 7px; border-color: #a6a6a6 #e4e4e4 #e6e6e6 #b8b8b8; background: #fafafa; }
.element { left: 788px; top: 210px; width: 116px; height: 54px; line-height: 46px; padding-left: 15px; border-width: 8px; border-color: #a6a6a6 #b4b4b4 #b0b0b0 #9c9c9c; background: #d2d2d2; box-shadow: inset 8px 8px 0 #7e7e7e, 7px 7px 0 #e7e7e7; }
.element { padding-top: 2px; }

/* charts */
.chart { position: absolute; }
.legend { margin-left: auto; height: 42px; display: flex; align-items: center; justify-content: flex-end; padding: 0 30px 3px 0; font-size: 22px; border-top: 4px solid #d2d2d2; border-bottom: 3px solid #8f8f8f; background: linear-gradient(90deg, #b8b8b8, #d4d4d4 4px, #d4d4d4 16px, #c0c0c0 26px, #c0c0c0 calc(100% - 26px), #8f8f8f calc(100% - 5px), #444); }
.swatch { width: 56px; height: 34px; margin-left: 22px; }
.plot { width: 100%; background: linear-gradient(#d2d2d2, #d2d2d2) top/100% 4px no-repeat, linear-gradient(#8a8a8a, #8a8a8a) bottom/100% 3px no-repeat, linear-gradient(90deg, #b8b8b8, #d4d4d4 4px, #d4d4d4 16px, #c0c0c0 26px, #c0c0c0 calc(100% - 26px), #8f8f8f calc(100% - 5px), #444); }
.c-sine { left: 52px; top: 306px; width: 528px; }
.c-sine .legend { width: 186px; }
.c-tri { left: 730px; top: 300px; width: 498px; }
.c-tri .legend { width: 224px; }
.c-sq { left: 52px; top: 714px; width: 522px; }
.c-sq .legend { width: 214px; }
.c-saw { left: 706px; top: 670px; width: 522px; }
.c-saw .legend { width: 240px; }
.hi { fill: #dcdcdc; }
.lo { fill: #555; }
.minor path, .major path { fill: none; shape-rendering: crispEdges; }
.minor path { stroke: #173b10; }
.major path { stroke: #2b6a1c; stroke-width: 2; }
.axis { stroke: #000; stroke-width: 2; }
.trace { fill: none; stroke: #fff; stroke-width: 2; }
.num text, .ynum text { font-size: 22px; letter-spacing: -0.3px; }
.num text { text-anchor: middle; }
.ynum text { text-anchor: end; }
.name { font-size: 26px; text-anchor: middle; letter-spacing: -0.3px; }

/* knobs */
.tick { stroke: #000; stroke-width: 2; fill: none; }
.dent { fill: url(#dimple); opacity: .65; }
.knob { position: absolute; width: 180px; height: 180px; margin: -90px 0 0 -90px; }
.k1 { left: 290px; top: 1284px; }
.k2 { left: 556px; top: 1284px; }
.k3 { left: 891px; top: 1260px; }
.k4 { left: 1156px; top: 1260px; }
.k5 { left: 268px; top: 1572px; }
.k6 { left: 556px; top: 1548px; }
.k7 { left: 890px; top: 1548px; }
.k8 { left: 1180px; top: 1548px; }
.kl { width: 140px; margin-left: -70px; text-align: center; }
.k1l { left: 287px; top: 1165px; }
.k2l { left: 564px; top: 1147px; }
.k3l { left: 876px; top: 1123px; }
.k4l { left: 1146px; top: 1123px; }
.k5l { left: 252px; top: 1435px; }
.k6l { left: 544px; top: 1411px; }
.k7l { left: 874px; top: 1411px; }
.k8l { left: 1171px; top: 1411px; }

/* diagram terminals */
.wires { position: absolute; left: 1454px; top: 180px; width: 1400px; height: 1000px; }
.w { fill: none; stroke: #ef8733; stroke-width: 2; }
.term { position: absolute; width: 76px; height: 76px; }
.mini text { font: bold 15px "Liberation Mono", monospace; fill: #555; text-anchor: middle; }
.mini.dark text { fill: #000; }
.mini.small text { font-size: 13px; font-weight: 400; }
.tag { font: 14px "Liberation Mono", monospace; text-anchor: middle; }
.d1 { left: 1484px; top: 348px; } .d1l { left: 1488px; top: 321px; }
.d2 { left: 1472px; top: 582px; } .d2l { left: 1476px; top: 555px; }
.d3 { left: 1484px; top: 740px; } .d3l { left: 1488px; top: 713px; }
.d4 { left: 1502px; top: 878px; } .d4l { left: 1506px; top: 851px; }
.d5 { left: 2272px; top: 478px; } .d5l { left: 2276px; top: 451px; }
.d6 { left: 2272px; top: 608px; } .d6l { left: 2276px; top: 581px; }
.d7 { left: 2280px; top: 782px; } .d7l { left: 2284px; top: 755px; }
.d8 { left: 2284px; top: 926px; } .d8l { left: 2288px; top: 899px; }
.g0 { left: 2244px; top: 336px; } .g0l { left: 2248px; top: 309px; }
.g1 { left: 2022px; top: 624px; } .g1l { left: 2026px; top: 597px; }
.g2 { left: 1914px; top: 914px; } .g2l { left: 1918px; top: 887px; }
.g3 { left: 2748px; top: 638px; } .g3l { left: 2752px; top: 611px; }
.g4 { left: 2690px; top: 930px; } .g4l { left: 2694px; top: 903px; }

/* array constant */
.aindex { position: absolute; left: 1844px; top: 352px; width: 66px; height: 36px; padding: 2px; display: flex; border: 2px solid #0000f0; background: #fff; }
.aindex svg { width: 14px; height: 28px; }
.aindex b { flex: 1; font: 22px/28px Inter, sans-serif; border: 2px solid #0000f0; padding-left: 4px; }
.aconst { position: absolute; left: 1908px; top: 352px; width: 320px; height: 46px; display: flex; align-items: center; gap: 8px; padding-left: 8px; border: 2px solid #0000f0; background: #0000f0; box-shadow: inset 0 0 0 2px #fff; font-size: 22px; }
.aconst span { flex: none; width: 20px; height: 26px; line-height: 29px; text-align: center; background: #fff; }
.dim { display: flex; align-items: center; gap: 8px; height: 34px; margin-left: -4px; padding: 0 4px; background: #9a9aff; color: #999; }

/* express nodes */
.node { position: absolute; width: 192px; display: flex; flex-direction: column; border: 2px solid #4169f0; background: #d0e6ff; font-size: 22px; line-height: 26px; text-align: center; }
.body { flex: 1; position: relative; display: flex; flex-direction: column; align-items: center; }
.body p { margin: auto 0 0; }
.ico { width: 64px; height: 64px; margin-top: 22px; }
.n2 .ico { margin-top: 32px; }
.pins { position: absolute; left: 2px; top: 5px; width: 7px; height: 120px; }
.opin { position: absolute; right: 2px; bottom: 33px; width: 7px; height: 12px; fill: #8a8a2a; }
.n2 .opin, .n3 .opin, .n4 .opin { bottom: 60px; }
.orange { fill: #ef8733; } .olive { fill: #8a8a2a; } .green { fill: #2c8a2c; }
.out { height: 32px; position: relative; padding: 2px 8px 0 0; border: solid #4169f0; border-width: 2px 0; background: #fff; color: #000080; }
.out svg { position: absolute; right: 2px; top: 7px; width: 7px; height: 12px; }
.foot { height: 17px; display: flex; justify-content: center; }
.foot svg { width: 16px; height: 14px; margin: 1px 0 0 3px; }
.n1 { left: 1784px; top: 504px; height: 194px; }
.n2 { left: 1676px; top: 748px; height: 238px; }
.n3 { left: 2462px; top: 490px; height: 220px; }
.n4 { left: 2444px; top: 800px; height: 220px; }
```
